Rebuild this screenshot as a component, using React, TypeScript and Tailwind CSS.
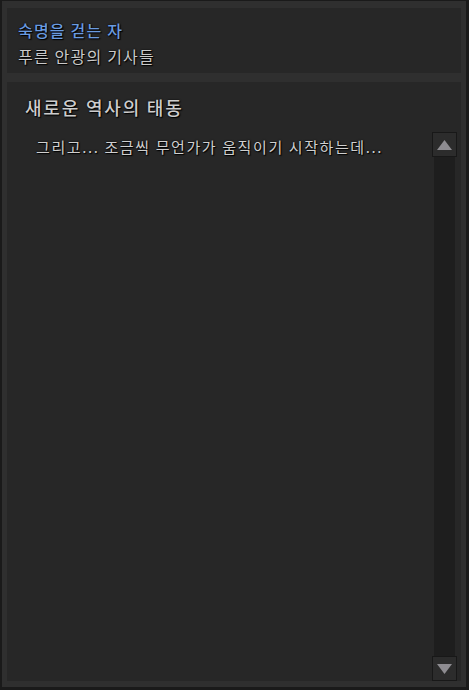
import React from 'react';

const font = "font-['Noto_Sans_CJK_KR','Noto_Sans',sans-serif]";
const shadow = '[text-shadow:1px_1px_1px_#000,0_0_2px_#000]';

function ScrollButton({ dir }: { dir: 'up' | 'down' }) {
  return (
    <div className="w-[25px] h-[25px] border border-[#181818] bg-[#2c2c2c] flex items-center justify-center">
      <svg width="17" height="12" viewBox="0 0 17 12">
        {dir === 'up' ? (
          <polygon points="8.5,1 16,11 1,11" fill="#8e8c91" />
        ) : (
          <polygon points="1,1 16,1 8.5,11" fill="#8e8c91" />
        )}
      </svg>
    </div>
  );
}

export default function App() {
  return (
    <div className={`w-[469px] h-[690px] bg-[#1a1a1a] pt-px pl-[2px] pr-[3px] pb-[3px] ${font}`}>
      <div className="w-full h-full bg-[#2f2f2f] pt-[7px] px-[5px] pb-[6px] flex flex-col gap-[9px]">
        {/* character header */}
        <div className="h-[65px] bg-[#272727] pl-[11px] pt-[12px] flex flex-col">
          <div className={`text-[16px] leading-[20px] font-medium tracking-[1.2px] text-[#6a9be0] ${shadow}`}>
            숙명을 걷는 자
          </div>
          <div className={`mt-[6px] text-[16px] leading-[20px] tracking-[1.2px] text-[#c9c9c9] ${shadow}`}>
            푸른 안광의 기사들
          </div>
        </div>

        {/* story panel */}
        <div className="flex-1 bg-[#272727] flex flex-col min-h-0">
          <div className={`pl-[18px] pt-[12px] text-[18px] leading-[26px] font-medium tracking-[1.8px] text-[#cdcdcd] ${shadow}`}>
            새로운 역사의 태동
          </div>
          <div className="flex-1 flex mt-[12px] min-h-0">
            <div className={`flex-1 pl-[29px] pt-[4px] text-[15px] leading-[22px] tracking-[1.6px] text-[#cfcfcf] ${shadow}`}>
              그리고... 조금씩 무언가가 움직이기 시작하는데...
            </div>
            <div className="w-[25px] mr-[4px] flex flex-col">
              <ScrollButton dir="up" />
              <div className="flex-1 mx-[2px] bg-[#1e1e1e]" />
              <ScrollButton dir="down" />
            </div>
          </div>
        </div>
      </div>
    </div>
  );
}
